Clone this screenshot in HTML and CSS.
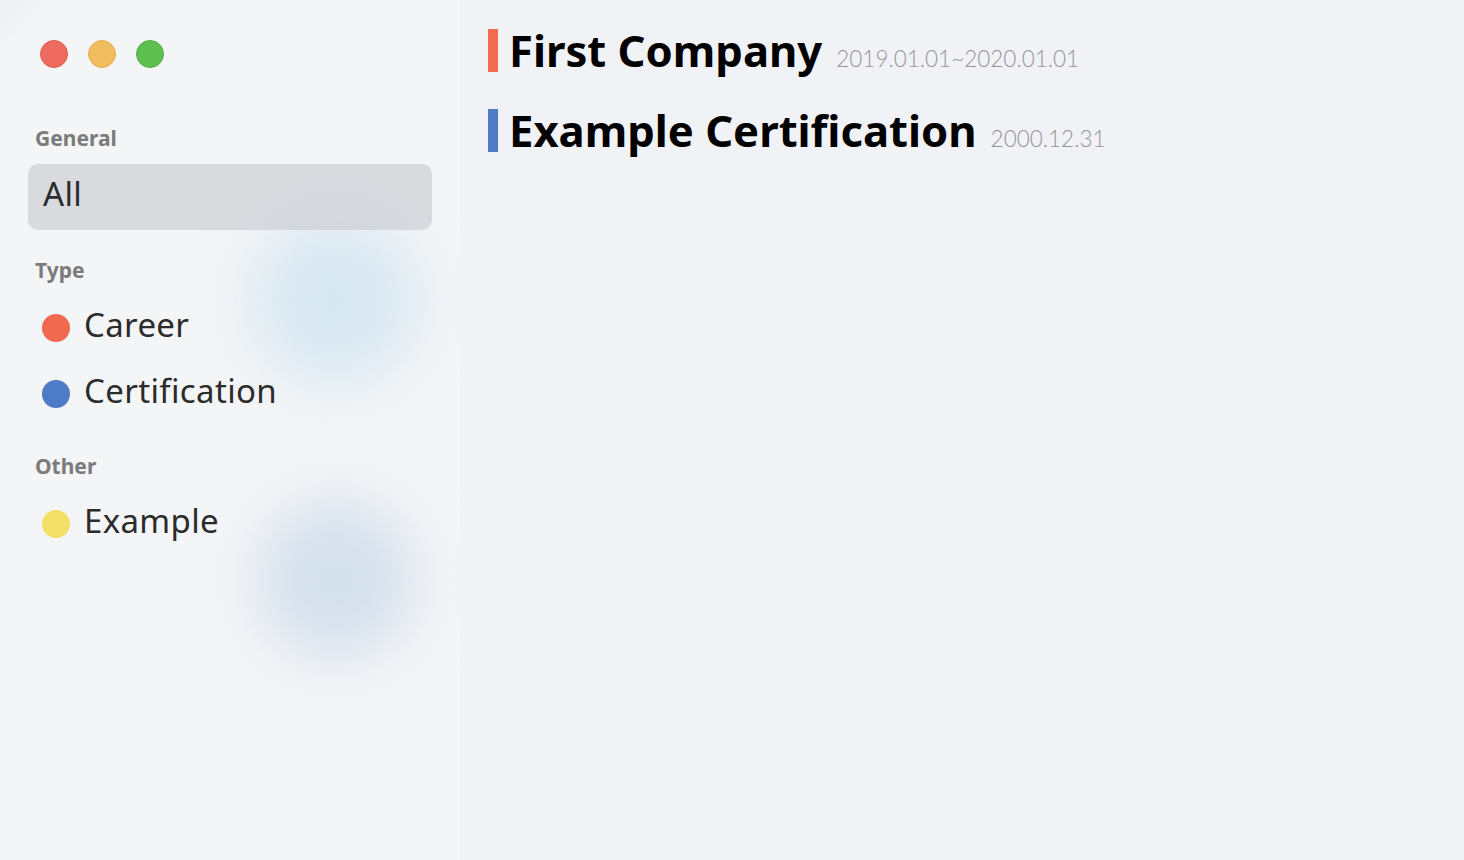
FILE: index.html
```html
<!DOCTYPE html>
<html lang="en">
<head>
<meta charset="utf-8">
<title>Timeline</title>
<link rel="stylesheet" href="styles.css">
</head>
<body>
<div class="app">
  <aside class="sidebar">
    <div class="blob blob-top"></div>
    <div class="blob blob-bottom"></div>
    <div class="blob blob-corner"></div>
    <div class="sidebar-inner">
      <div class="lights">
        <span class="light light-red"></span>
        <span class="light light-yellow"></span>
        <span class="light light-green"></span>
      </div>
      <div class="section-label first">General</div>
      <div class="item item-selected">All</div>
      <div class="section-label">Type</div>
      <div class="item"><span class="dot dot-red"></span>Career</div>
      <div class="item"><span class="dot dot-blue"></span>Certification</div>
      <div class="section-label">Other</div>
      <div class="item"><span class="dot dot-yellow"></span>Example</div>
    </div>
  </aside>
  <main class="main">
    <div class="entry">
      <h2 class="entry-title bar-red">First Company</h2>
      <span class="entry-date">2019.01.01~2020.01.01</span>
    </div>
    <div class="entry">
      <h2 class="entry-title bar-blue">Example Certification</h2>
      <span class="entry-date">2000.12.31</span>
    </div>
  </main>
</div>
</body>
</html>
```
FILE: styles.css
```css
* { box-sizing: border-box; }
html, body { margin: 0; padding: 0; }
body {
  font-family: "Noto Sans", "Open Sans", sans-serif;
  background: #f1f2f6;
  color: #222;
}
.app {
  display: flex;
  height: 860px;
  overflow: hidden;
}
.sidebar {
  width: 460px;
  flex: none;
  position: relative;
  overflow: hidden;
  background: #f4f5f7;
}
.blob {
  position: absolute;
  border-radius: 50%;
  filter: blur(30px);
}
.blob-top {
  left: 250px; top: 215px; width: 170px; height: 170px;
  background: #d8e8f2;
}
.blob-bottom {
  left: 258px; top: 502px; width: 155px; height: 155px;
  background: #d3dfec;
}
.blob-corner {
  left: -70px; top: -70px; width: 110px; height: 110px;
  background: #f0f1f4;
  filter: blur(6px);
}
.sidebar-inner {
  position: relative;
  padding: 40px 28px 0 28px;
}
.lights {
  display: flex;
  gap: 20px;
  padding-left: 12px;
}
.light {
  width: 28px; height: 28px;
  border-radius: 50%;
  display: block;
}
.light-red { background: #ef6a5e; border: 1px solid #e05b50; }
.light-yellow { background: #f0bd60; border: 1px solid #e6ad52; }
.light-green { background: #5dbf50; border: 1px solid #4fae43; }
.section-label {
  font-size: 21px;
  font-weight: 700;
  color: #7b7b7b;
  line-height: 24px;
  margin: 28px 0 12px 7px;
}
.section-label.first {
  margin-top: 58px;
  margin-bottom: 14px;
}
.item {
  display: flex;
  align-items: center;
  height: 66px;
  padding-left: 14px;
  padding-bottom: 6px;
  font-size: 33px;
  color: #2b2b2b;
  letter-spacing: 0.35px;
}
.item-selected {
  background: rgba(205, 208, 212, 0.72);
  border-radius: 10px;
  padding-left: 15px;
  padding-bottom: 8px;
}
.dot {
  width: 28px; height: 28px;
  border-radius: 50%;
  margin-right: 14px;
  margin-top: 8px;
  flex: none;
}
.dot-red { background: #ef6a4f; }
.dot-blue { background: #4e7bc5; }
.dot-yellow { background: #f2e068; }
.main {
  flex: 1;
  padding: 29px 0 0 28px;
}
.entry {
  display: flex;
  align-items: baseline;
  margin-bottom: 37px;
}
.entry-title {
  margin: 0;
  font-size: 43.6px;
  font-weight: 700;
  line-height: 43px;
  color: #000;
  padding-left: 11px;
  border-left: 10px solid;
}
.bar-red { border-left-color: #f06b50; }
.bar-blue { border-left-color: #4e7bc4; }
.entry-date {
  margin-left: 14px;
  font-family: "Lato", "Noto Sans", sans-serif;
  font-size: 22.5px;
  font-weight: 300;
  color: #959595;
}
```
